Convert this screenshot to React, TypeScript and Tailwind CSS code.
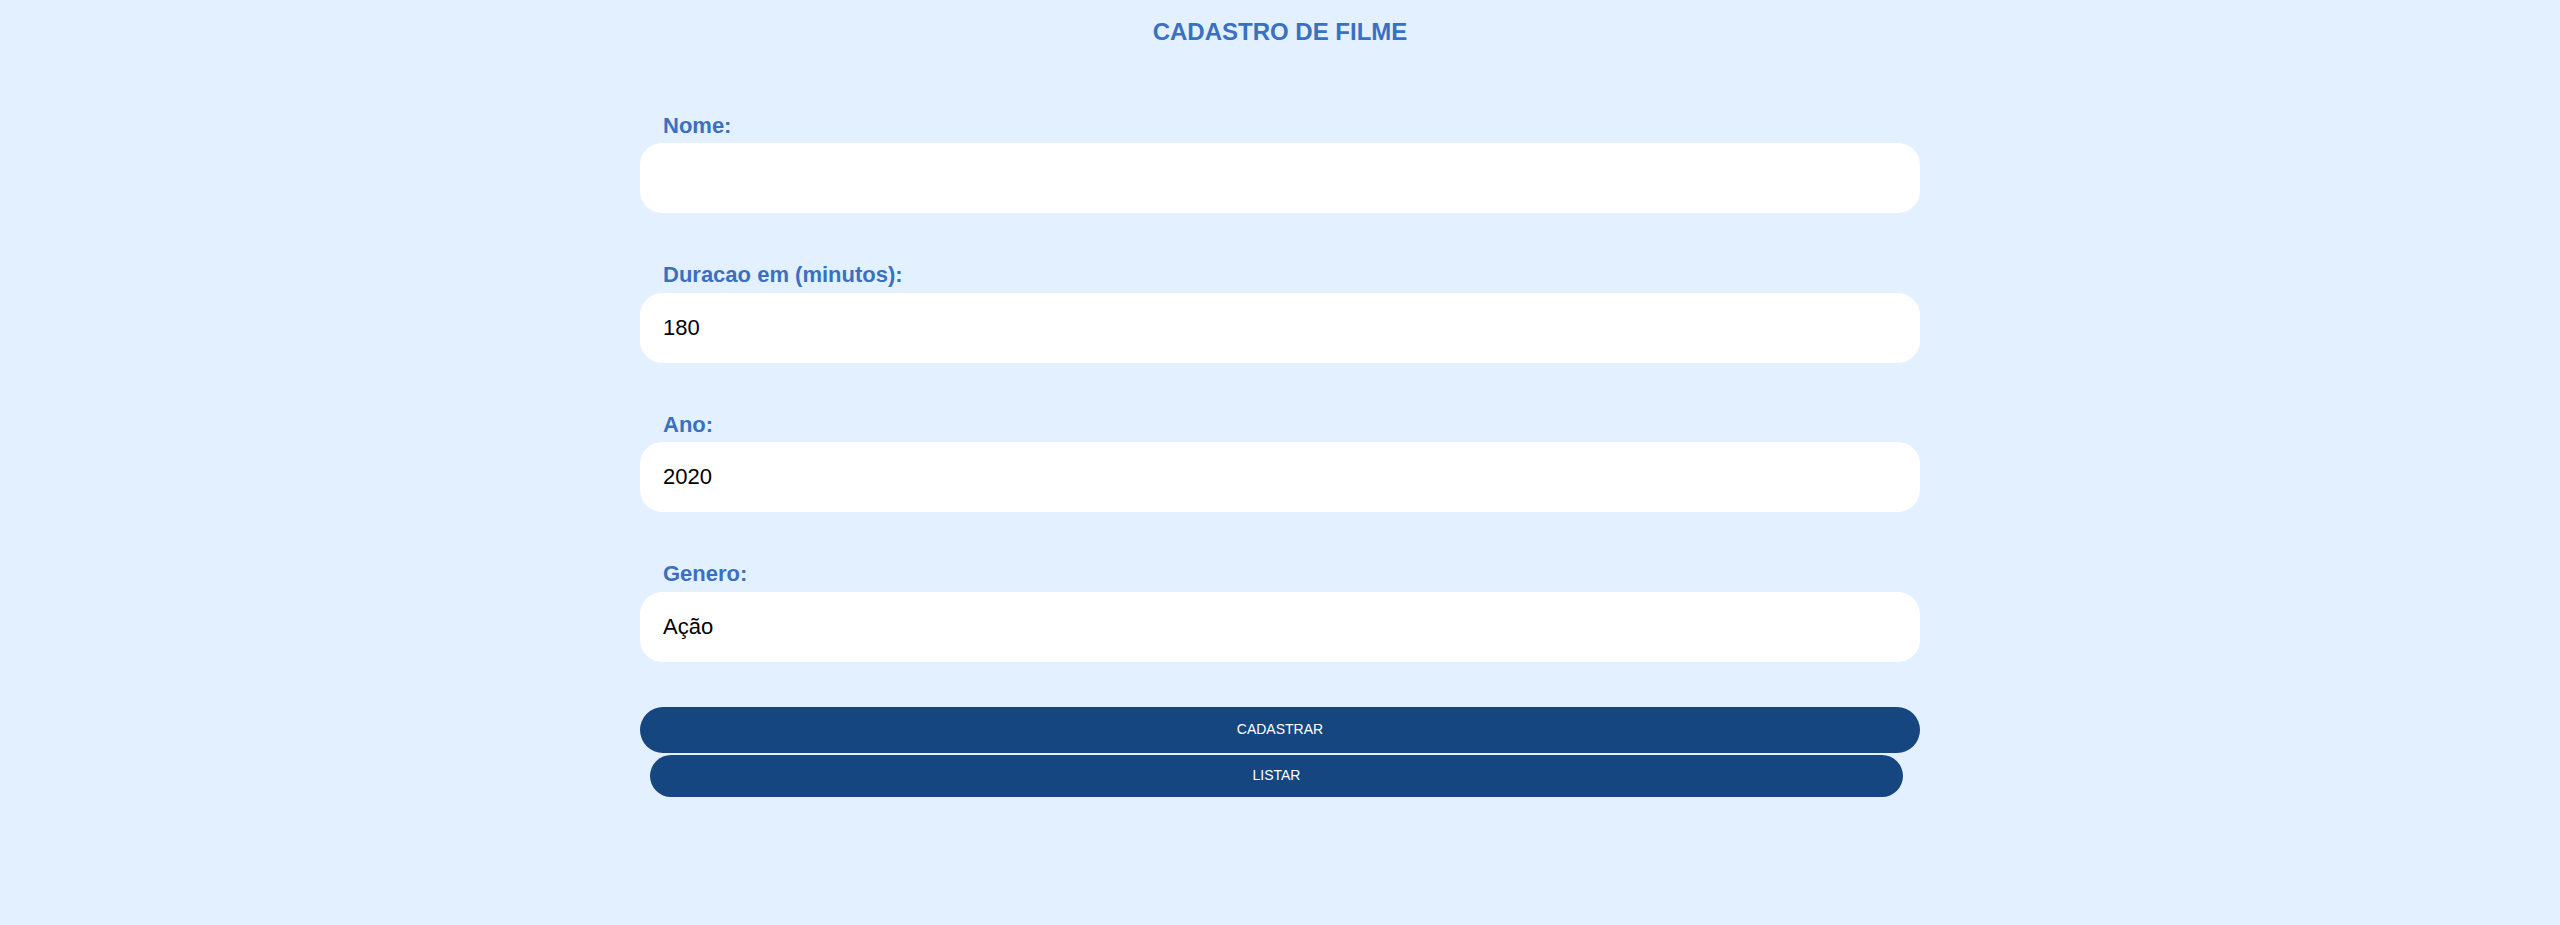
import { useState } from 'react'

const fields = [
  { id: 'nome', label: 'Nome:', value: '' },
  { id: 'duracao', label: 'Duracao em (minutos):', value: '180' },
  { id: 'ano', label: 'Ano:', value: '2020' },
  { id: 'genero', label: 'Genero:', value: 'Ação' },
]

export default function App() {
  const [values, setValues] = useState<Record<string, string>>(
    Object.fromEntries(fields.map((f) => [f.id, f.value]))
  )

  return (
    <div className="min-h-screen bg-[#e3f0ff] font-['Liberation_Sans',Arial,sans-serif]">
      <h1 className="pt-[18px] text-center text-[24px] font-bold leading-[28px] text-[#3a70c1]">
        CADASTRO DE FILME
      </h1>

      <form className="mx-auto mt-[66.5px] w-[1280px]" onSubmit={(e) => e.preventDefault()}>
        {fields.map((f, i) => (
          <div key={f.id} className={i === 0 ? '' : 'mt-[49px]'}>
            <label
              htmlFor={f.id}
              className="ml-[23px] block text-[22px] font-bold leading-[25px] text-[#3a70c1]"
            >
              {f.label}
            </label>
            <input
              id={f.id}
              value={values[f.id]}
              onChange={(e) => setValues({ ...values, [f.id]: e.target.value })}
              className="mt-[5.5px] block h-[70px] w-full rounded-[22px] border-0 bg-white px-[23px] text-[22px] text-black outline-none"
            />
          </div>
        ))}

        <button
          type="submit"
          className="mt-[45px] block h-[46px] w-full rounded-full bg-[#154680] text-[14px] text-white"
        >
          CADASTRAR
        </button>
        <button
          type="button"
          className="ml-[10px] mt-[2px] block h-[42px] w-[1253px] rounded-full bg-[#154680] text-[14px] text-white"
        >
          LISTAR
        </button>
      </form>
    </div>
  )
}
